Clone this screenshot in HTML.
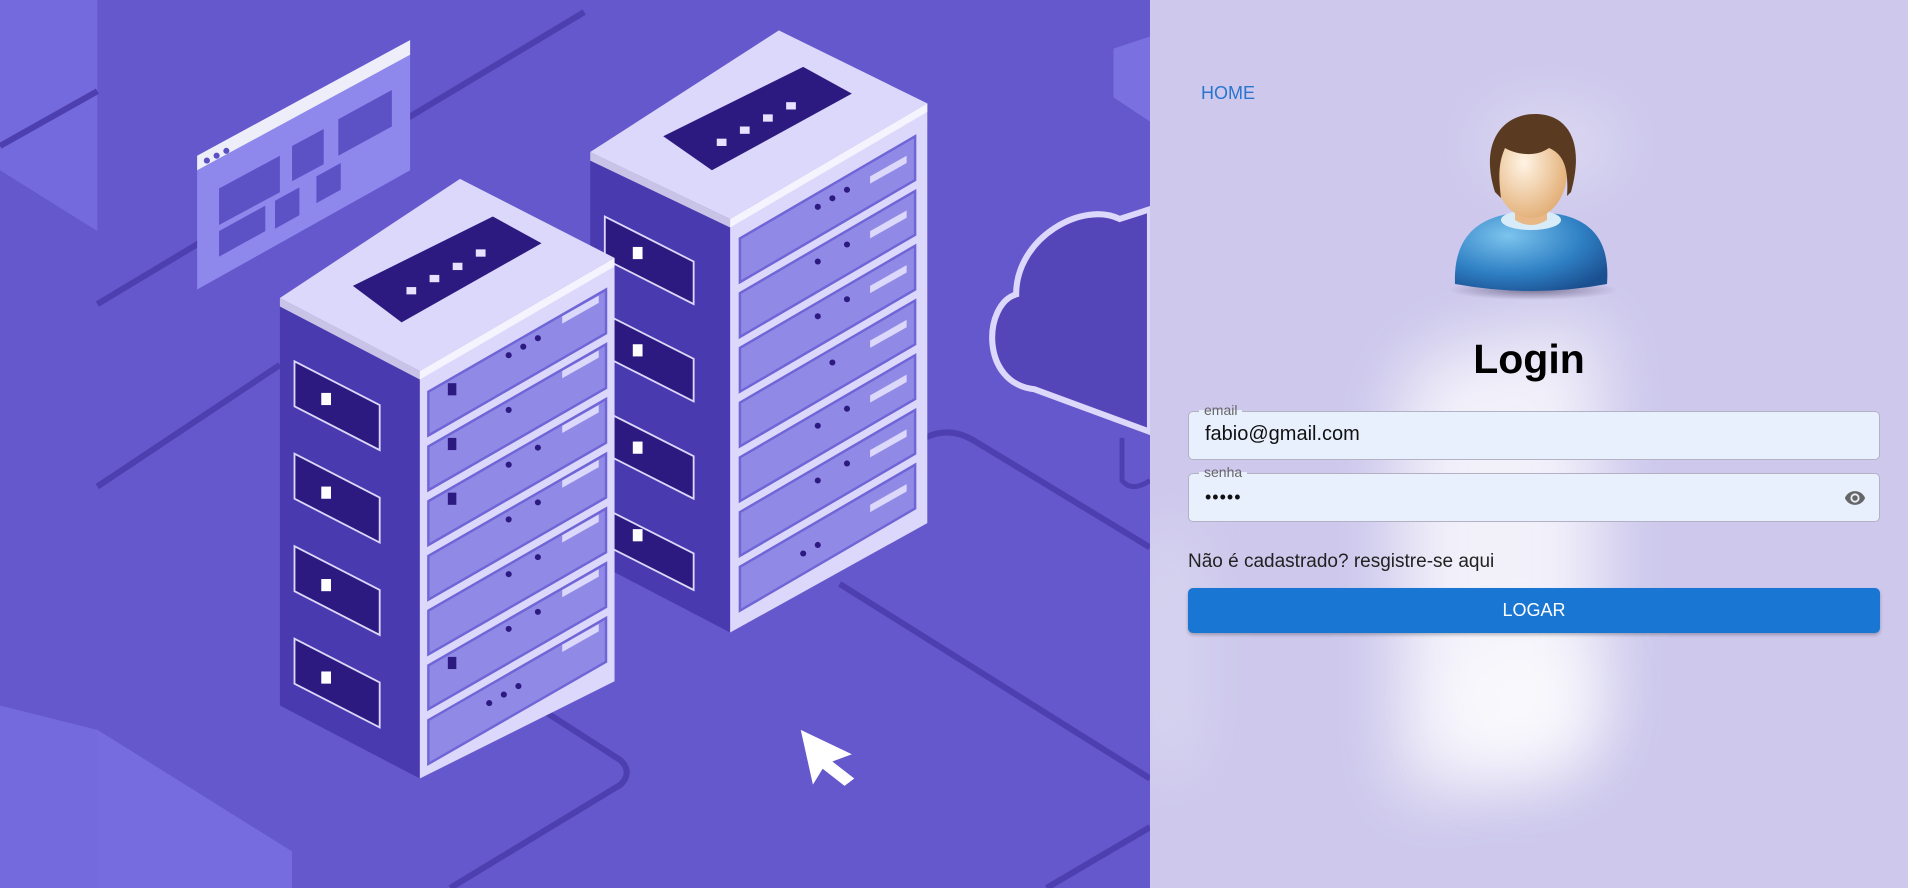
<!DOCTYPE html>
<html><head><meta charset="utf-8">
<style>
*{margin:0;padding:0;box-sizing:border-box}
body{width:1908px;height:888px;overflow:hidden;font-family:"Liberation Sans",Arial,sans-serif;position:relative;background:#cdc8ec}
#left{position:absolute;left:0;top:0;width:1150px;height:888px;background:#6557cc;overflow:hidden}
#right{position:absolute;left:1150px;top:0;width:758px;height:888px;background:#cdc8ec;overflow:hidden}
.blob{position:absolute;background:#fff;filter:blur(35px);border-radius:40px}
.home{position:absolute;left:51px;top:83px;color:#2a74d0;font-size:18px}
h1{position:absolute;left:0;width:758px;top:336px;text-align:center;font-size:41px;font-weight:bold;color:#000;font-family:"Liberation Sans",sans-serif}
.field{position:absolute;left:38px;width:692px;height:49px;background:#e9f0fd;border:1px solid #b3b1c4;border-radius:5px}
.lbl{position:absolute;left:10px;top:-10px;font-size:14px;color:#666;padding:0 5px;background:linear-gradient(#cdc8ec 50%,#e9f0fd 50%);line-height:16px}
.val{position:absolute;left:16px;top:11px;font-size:20px;color:#111}
.reg{position:absolute;left:38px;top:551px;font-size:19px;color:#222}
.btn{position:absolute;left:38px;top:588px;width:692px;height:45px;background:#1976d2;border-radius:5px;color:#fff;font-size:18px;text-align:center;line-height:45px;box-shadow:0 2px 3px rgba(0,0,0,.25)}
</style></head><body>
<div id="left">
<svg width="1150" height="888" viewBox="0 0 945 730" preserveAspectRatio="none">
<rect width="945" height="730" fill="#6557cc"/>
<polygon points="0,0 80,0 80,190 0,140" fill="#7469dd"/>
<polygon points="0,580 80,600 240,700 240,730 0,730" fill="#7469dd"/>
<polygon points="80,600 240,700 240,730 80,730" fill="#766ce0"/>
<g stroke="#4e3fb0" stroke-width="5" fill="none">
<line x1="0" y1="120" x2="80" y2="75"/>
<line x1="80" y1="250" x2="480" y2="10"/>
<line x1="80" y1="400" x2="230" y2="300"/>
<path d="M440,580 L510,625 Q520,635 510,645 L370,730"/>
<path d="M760,360 Q780,350 800,362 L945,450"/>
<line x1="690" y1="480" x2="945" y2="640"/>
<line x1="860" y1="730" x2="945" y2="680"/>
</g>
<polygon points="915,40 945,30 945,100 915,80" fill="#7b70e0"/>
<!-- window -->
<polygon points="162,128 337,33 337,140 162,238" fill="#8f88ec"/>
<polygon points="162,128 337,33 337,45 162,140" fill="#eeeefa"/>
<circle cx="170" cy="132" r="2.5" fill="#5b4fc4"/><circle cx="178" cy="128" r="2.5" fill="#5b4fc4"/><circle cx="186" cy="124" r="2.5" fill="#5b4fc4"/>
<g fill="#5d51c6">
<polygon points="180,155 230,128 230,158 180,185"/>
<polygon points="240,120 266,106 266,135 240,149"/>
<polygon points="278,98 322,74 322,104 278,128"/>
<polygon points="180,190 218,169 218,190 180,211"/>
<polygon points="226,165 246,154 246,177 226,188"/>
<polygon points="260,145 280,134 280,156 260,167"/>
</g>
<!-- cloud -->
<path d="M850,320 C805,315 808,250 835,242 C835,195 890,165 920,180 L945,172 L945,355 Z" fill="#5446b8" stroke="#dcd8fb" stroke-width="5"/>
<path d="M922,360 L922,395 Q930,405 945,395" fill="none" stroke="#4e3fb0" stroke-width="4"/>
<!-- right tower -->
<polygon points="485,125 600,180 600,520 485,460" fill="#4a3ab0"/>
<polygon points="600,180 762,85 762,430 600,520" fill="#dcd8fb"/>
<polygon points="485,125 640,25 762,85 600,180" fill="#dcd8fb"/>
<polygon points="485,125 600,180 762,85 762,92 600,187 485,132" fill="#fff" opacity=".7"/>
<polygon points="545,112 660,55 700,77 585,140" fill="#2d1a80"/>
<g fill="#e6e2ff"><rect x="589" y="114" width="8" height="6"/><rect x="608" y="104" width="8" height="6"/><rect x="627" y="94" width="8" height="6"/><rect x="646" y="84" width="8" height="6"/></g>
<g fill="#9189e6" stroke="#6f65d6" stroke-width="2">
<polygon points="608,196 752,112 752,148 608,232"/>
<polygon points="608,241 752,157 752,193 608,277"/>
<polygon points="608,286 752,202 752,238 608,322"/>
<polygon points="608,331 752,247 752,283 608,367"/>
<polygon points="608,376 752,292 752,328 608,412"/>
<polygon points="608,421 752,337 752,373 608,457"/>
<polygon points="608,466 752,382 752,418 608,502"/>
</g>
<g fill="#dcd8fb"><polygon points="715,145 745,128 745,134 715,151"/><polygon points="715,190 745,173 745,179 715,196"/><polygon points="715,235 745,218 745,224 715,241"/><polygon points="715,280 745,263 745,269 715,286"/><polygon points="715,325 745,308 745,314 715,331"/><polygon points="715,370 745,353 745,359 715,376"/><polygon points="715,415 745,398 745,404 715,421"/></g>
<g fill="#2d1a80"><circle cx="672" cy="170" r="2.5"/><circle cx="684" cy="163" r="2.5"/><circle cx="696" cy="156" r="2.5"/><circle cx="672" cy="215" r="2.5"/><circle cx="696" cy="201" r="2.5"/><circle cx="672" cy="260" r="2.5"/><circle cx="696" cy="246" r="2.5"/><circle cx="684" cy="298" r="2.5"/><circle cx="672" cy="350" r="2.5"/><circle cx="696" cy="336" r="2.5"/><circle cx="672" cy="395" r="2.5"/><circle cx="696" cy="381" r="2.5"/><circle cx="660" cy="455" r="2.5"/><circle cx="672" cy="448" r="2.5"/></g>
<g fill="#2d1a80" stroke="#dcd8fb" stroke-width="1.5">
<polygon points="497,178 570,215 570,250 497,213"/>
<polygon points="497,258 570,295 570,330 497,293"/>
<polygon points="497,338 570,375 570,410 497,373"/>
<polygon points="497,418 570,455 570,485 497,448"/>
</g>
<g fill="#fff"><rect x="520" y="203" width="8" height="10"/><rect x="520" y="283" width="8" height="10"/><rect x="520" y="363" width="8" height="10"/><rect x="520" y="435" width="8" height="10"/></g>
<!-- left tower -->
<polygon points="230,245 345,305 345,640 230,580" fill="#4a3ab0"/>
<polygon points="345,305 505,212 505,560 345,640" fill="#dcd8fb"/>
<polygon points="230,245 378,147 505,212 345,305" fill="#dcd8fb"/>
<polygon points="230,245 345,305 505,212 505,219 345,312 230,252" fill="#fff" opacity=".7"/>
<polygon points="290,235 405,178 445,200 330,265" fill="#2d1a80"/>
<g fill="#e6e2ff"><rect x="334" y="236" width="8" height="6"/><rect x="353" y="226" width="8" height="6"/><rect x="372" y="216" width="8" height="6"/><rect x="391" y="205" width="8" height="6"/></g>
<g fill="#9189e6" stroke="#6f65d6" stroke-width="2">
<polygon points="352,322 498,238 498,274 352,358"/>
<polygon points="352,367 498,283 498,319 352,403"/>
<polygon points="352,412 498,328 498,364 352,448"/>
<polygon points="352,457 498,373 498,409 352,493"/>
<polygon points="352,502 498,418 498,454 352,538"/>
<polygon points="352,547 498,463 498,499 352,583"/>
<polygon points="352,592 498,508 498,544 352,628"/>
</g>
<g fill="#dcd8fb"><polygon points="462,260 492,243 492,249 462,266"/><polygon points="462,305 492,288 492,294 462,311"/><polygon points="462,350 492,333 492,339 462,356"/><polygon points="462,395 492,378 492,384 462,401"/><polygon points="462,440 492,423 492,429 462,446"/><polygon points="462,485 492,468 492,474 462,491"/><polygon points="462,530 492,513 492,519 462,536"/></g>
<g fill="#2d1a80"><circle cx="418" cy="292" r="2.5"/><circle cx="430" cy="285" r="2.5"/><circle cx="442" cy="278" r="2.5"/><circle cx="418" cy="337" r="2.5"/><circle cx="418" cy="382" r="2.5"/><circle cx="442" cy="368" r="2.5"/><circle cx="418" cy="427" r="2.5"/><circle cx="442" cy="413" r="2.5"/><circle cx="418" cy="472" r="2.5"/><circle cx="442" cy="458" r="2.5"/><circle cx="418" cy="517" r="2.5"/><circle cx="442" cy="503" r="2.5"/><circle cx="402" cy="578" r="2.5"/><circle cx="414" cy="571" r="2.5"/><circle cx="426" cy="564" r="2.5"/></g>
<g fill="#2d1a80"><rect x="368" y="315" width="7" height="10"/><rect x="368" y="360" width="7" height="10"/><rect x="368" y="405" width="7" height="10"/><rect x="368" y="540" width="7" height="10"/></g>
<g fill="#2d1a80" stroke="#dcd8fb" stroke-width="1.5">
<polygon points="242,297 312,333 312,370 242,334"/>
<polygon points="242,373 312,409 312,446 242,410"/>
<polygon points="242,449 312,485 312,522 242,486"/>
<polygon points="242,525 312,561 312,598 242,562"/>
</g>
<g fill="#fff"><rect x="264" y="323" width="8" height="10"/><rect x="264" y="400" width="8" height="10"/><rect x="264" y="476" width="8" height="10"/><rect x="264" y="552" width="8" height="10"/></g>
<!-- cursor -->
<polygon points="658,600 700,620 684,626 702,640 694,646 676,632 668,645" fill="#fff"/>
</svg>
</div>
<div id="right">
<div class="blob" style="left:0px;top:520px;width:40px;height:260px;opacity:.35"></div>
<div class="blob" style="left:250px;top:340px;width:200px;height:440px;opacity:.75;transform:skewY(-10deg)"></div>
<div class="blob" style="left:300px;top:640px;width:140px;height:130px;opacity:.6"></div>
<div class="blob" style="left:330px;top:110px;width:140px;height:70px;opacity:.35"></div>
<div class="home">HOME</div>
<svg style="position:absolute;left:293px;top:112px" width="180" height="190" viewBox="0 0 180 190">
<defs>
<radialGradient id="sk" cx=".4" cy=".4" r=".7"><stop offset="0" stop-color="#fff4e4"/><stop offset="1" stop-color="#e0a86c"/></radialGradient>
<radialGradient id="bd" cx=".35" cy=".3" r=".8"><stop offset="0" stop-color="#7cc4ee"/><stop offset=".6" stop-color="#2f80c4"/><stop offset="1" stop-color="#1a4f90"/></radialGradient>
<radialGradient id="sh"><stop offset="0" stop-color="#554f70" stop-opacity=".7"/><stop offset="1" stop-color="#554f70" stop-opacity="0"/></radialGradient>
</defs>
<ellipse cx="90" cy="178" rx="85" ry="10" fill="url(#sh)"/>
<path d="M12,172 C10,120 40,100 90,100 C140,100 168,120 164,172 Q90,186 12,172Z" fill="url(#bd)"/>
<ellipse cx="88" cy="108" rx="30" ry="10" fill="#d7ecf8"/>
<path d="M72,85 L72,108 Q88,118 104,108 L104,85Z" fill="#e8b886"/>
<ellipse cx="88" cy="60" rx="36" ry="46" fill="url(#sk)"/>
<path d="M52,80 C36,30 60,2 92,2 C125,2 142,30 128,80 L124,84 C126,55 120,42 106,36 C92,46 72,42 62,36 C56,50 55,62 58,86 Z" fill="#5a3a20"/>
</svg>
<h1>Login</h1>
<div class="field" style="top:411px"><span class="lbl">email</span><span class="val">fabio@gmail.com</span></div>
<div class="field" style="top:473px"><span class="lbl">senha</span><span class="val" style="top:13px;font-size:18px;letter-spacing:1px">•••••</span>
<svg style="position:absolute;right:10px;top:13px" width="28" height="22" viewBox="0 0 24 24"><path fill="#666" d="M12 4.5C7 4.5 2.7 7.6 1 12c1.7 4.4 6 7.5 11 7.5s9.3-3.1 11-7.5c-1.7-4.4-6-7.5-11-7.5zM12 17a5 5 0 1 1 0-10 5 5 0 0 1 0 10zm0-8a3 3 0 1 0 0 6 3 3 0 0 0 0-6z"/></svg></div>
<div class="reg">Não é cadastrado? resgistre-se aqui</div>
<div class="btn">LOGAR</div>
</div>
</body></html>
